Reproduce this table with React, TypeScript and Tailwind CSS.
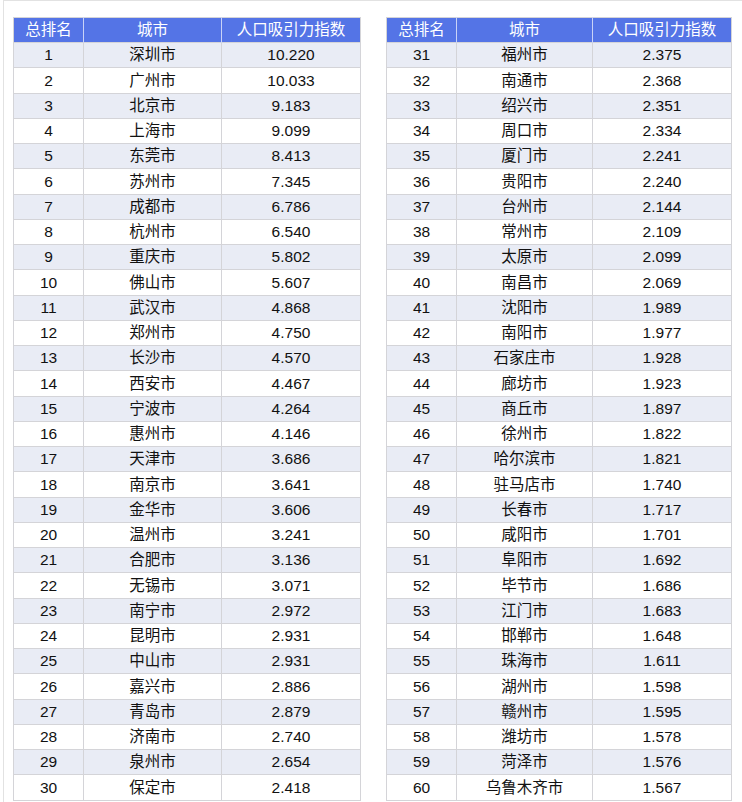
const data: [string, string][] = [
  ['深圳市', '10.220'], ['广州市', '10.033'], ['北京市', '9.183'], ['上海市', '9.099'], ['东莞市', '8.413'],
  ['苏州市', '7.345'], ['成都市', '6.786'], ['杭州市', '6.540'], ['重庆市', '5.802'], ['佛山市', '5.607'],
  ['武汉市', '4.868'], ['郑州市', '4.750'], ['长沙市', '4.570'], ['西安市', '4.467'], ['宁波市', '4.264'],
  ['惠州市', '4.146'], ['天津市', '3.686'], ['南京市', '3.641'], ['金华市', '3.606'], ['温州市', '3.241'],
  ['合肥市', '3.136'], ['无锡市', '3.071'], ['南宁市', '2.972'], ['昆明市', '2.931'], ['中山市', '2.931'],
  ['嘉兴市', '2.886'], ['青岛市', '2.879'], ['济南市', '2.740'], ['泉州市', '2.654'], ['保定市', '2.418'],
  ['福州市', '2.375'], ['南通市', '2.368'], ['绍兴市', '2.351'], ['周口市', '2.334'], ['厦门市', '2.241'],
  ['贵阳市', '2.240'], ['台州市', '2.144'], ['常州市', '2.109'], ['太原市', '2.099'], ['南昌市', '2.069'],
  ['沈阳市', '1.989'], ['南阳市', '1.977'], ['石家庄市', '1.928'], ['廊坊市', '1.923'], ['商丘市', '1.897'],
  ['徐州市', '1.822'], ['哈尔滨市', '1.821'], ['驻马店市', '1.740'], ['长春市', '1.717'], ['咸阳市', '1.701'],
  ['阜阳市', '1.692'], ['毕节市', '1.686'], ['江门市', '1.683'], ['邯郸市', '1.648'], ['珠海市', '1.611'],
  ['湖州市', '1.598'], ['赣州市', '1.595'], ['潍坊市', '1.578'], ['菏泽市', '1.576'], ['乌鲁木齐市', '1.567'],
];

function RankTable({ start, widths }: { start: number; widths: [string, string, string] }) {
  const rows = data.slice(start, start + 30);
  return (
    <table className="border-collapse border border-[#d4d4d8] text-[15.5px] text-[#111]">
      <thead>
        <tr className="h-[25px] bg-[#5474e6] text-white">
          <th className={`${widths[0]} font-normal border-r border-[#c9d3f7] p-0`}>总排名</th>
          <th className={`${widths[1]} font-normal border-r border-[#c9d3f7] p-0`}>城市</th>
          <th className={`${widths[2]} font-normal p-0`}>人口吸引力指数</th>
        </tr>
      </thead>
      <tbody>
        {rows.map(([city, v], i) => (
          <tr key={city} className={`h-[25.25px] ${i % 2 === 0 ? 'bg-[#e9ecf5]' : 'bg-white'}`}>
            <td className="text-center border border-[#d4d4d8] p-0 leading-none">{start + i + 1}</td>
            <td className="text-center border border-[#d4d4d8] p-0 leading-none">{city}</td>
            <td className="text-center border border-[#d4d4d8] p-0 leading-none">{v}</td>
          </tr>
        ))}
      </tbody>
    </table>
  );
}

export default function App() {
  return (
    <div className="w-[742px] h-[802px] overflow-hidden bg-white" style={{ fontFamily: '"Liberation Sans", "Noto Sans CJK SC", sans-serif' }}>
      <div className="ml-[3px] h-full border-l border-t border-[#e2e2e2] pl-[9px] pt-[16px] flex gap-[25px] items-start">
        <RankTable start={0} widths={['w-[70px]', 'w-[138px]', 'w-[139px]']} />
        <RankTable start={30} widths={['w-[70px]', 'w-[136px]', 'w-[139px]']} />
      </div>
    </div>
  );
}
